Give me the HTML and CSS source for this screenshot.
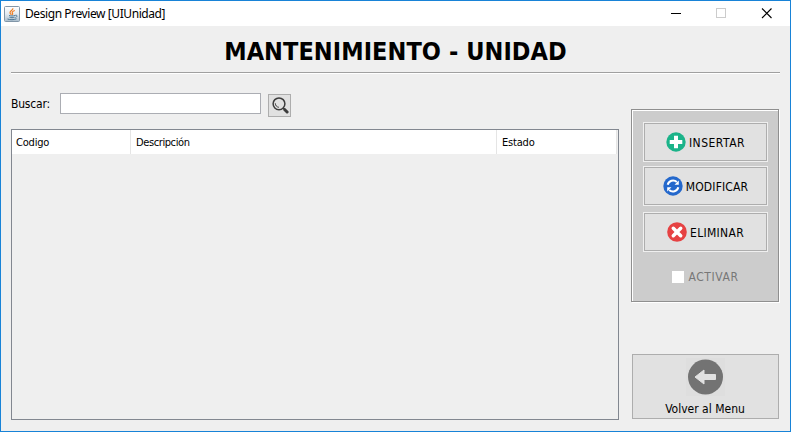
FILE: index.html
```html
<!DOCTYPE html>
<html lang="es">
<head>
<meta charset="utf-8">
<title>Design Preview [UIUnidad]</title>
<link rel="stylesheet" href="styles.css">
</head>
<body>
<div class="window">
  <header class="titlebar">
    <svg class="java" width="16" height="16" viewBox="0 0 16 16">
      <defs><linearGradient id="jg" x1="0" y1="0" x2="0" y2="1"><stop offset="0" stop-color="#fff"/><stop offset=".5" stop-color="#e4ebf1"/><stop offset="1" stop-color="#a9bccb"/></linearGradient></defs>
      <rect x=".5" y=".5" width="15" height="15" rx="1" fill="url(#jg)" stroke="#8296a8"/>
      <path d="M8.8 2.2C9.4 4 5.6 5 6 6.8c.2.9 1 1.300 1.300 2.100M10.800 4.500C8.500 5.300 7.600 6.300 8.500 7.300c.5.700.2 1.100-.2 1.600" fill="none" stroke="#ee7d22" stroke-width="1.200"/>
      <path d="M5 9.500c1.500.6 4.500.6 6 0M5.500 11.300c1.500.5 3.500.5 5 0M3.500 13c2.500 1 6.500.9 9-.2M11.200 9.300c2.300-.6 2.300 1.500.3 2.200" fill="none" stroke="#4d7896" stroke-width="1"/>
    </svg>
    <span class="caption">Design Preview [UIUnidad]</span>
    <svg class="controls" width="104" height="12" viewBox="0 0 104 12" shape-rendering="crispEdges">
      <path d="M0 5.500h10" stroke="#000"/>
      <rect x="45.500" y=".5" width="9" height="9" fill="none" stroke="#ccc"/>
      <path d="M91 .5l9.500 9.500M100.500 .5L91 10" stroke="#000" stroke-width="1.100" shape-rendering="auto"/>
    </svg>
  </header>
  <h1 class="heading"><span>MANTENIMIENTO - UNIDAD</span></h1>
  <main class="content">
    <section class="left">
      <div class="search">
        <label class="label" for="q">Buscar:</label>
        <input class="field" id="q" type="text">
        <button class="find" aria-label="Buscar">
          <svg width="19" height="19" viewBox="0 0 19 19" fill="none" stroke="#3c3c3c">
            <circle cx="9" cy="7.800" r="5.900" stroke-width="1.500"/>
            <path d="M5.300 7.300c.1 2.300 1.400 3.700 3.600 4" stroke-width="1"/>
            <path d="M13.200 12l1.500 1.500" stroke-width="1.600"/>
            <path d="M14.800 13.700l2.300 2.300" stroke-width="3" stroke-linecap="round"/>
          </svg>
        </button>
      </div>
      <div class="table">
        <div class="thead"><span class="codigo">Codigo</span><span class="desc">Descripción</span><span class="estado">Estado</span></div>
      </div>
    </section>
    <aside class="right">
      <div class="panel">
        <button class="action insert">
          <svg width="20" height="20" viewBox="0 0 20 20"><circle cx="10" cy="10" r="9.700" fill="#1bb389"/><path d="M10 3.700v12.600M3.700 10h12.600" stroke="#fff" stroke-width="4"/></svg>
          <span>INSERTAR</span>
        </button>
        <button class="action modify">
          <svg width="20" height="20" viewBox="0 0 20 20"><circle cx="10" cy="10" r="9.700" fill="#2468cc"/><path d="M4.700 8.700A5.500 5.500 0 0 1 13.800 6M15.300 11.300A5.500 5.500 0 0 1 6.200 14" fill="none" stroke="#fff" stroke-width="2"/><path d="M15.800 4.500v4.300h-4.300zM4.200 15.500v-4.300h4.300z" fill="#fff"/></svg>
          <span>MODIFICAR</span>
        </button>
        <button class="action remove">
          <svg width="20" height="20" viewBox="0 0 20 20"><circle cx="10" cy="10" r="9.800" fill="#e64243"/><path d="M6.300 6.300l7.400 7.400M13.700 6.300l-7.400 7.400" stroke="#fff" stroke-width="3.500" stroke-linecap="round"/></svg>
          <span>ELIMINAR</span>
        </button>
        <div class="check"><i class="box"></i><span>ACTIVAR</span></div>
      </div>
      <button class="back">
        <svg width="39" height="38" viewBox="0 0 39 38"><rect width="39" height="38" fill="#dedede"/><circle cx="19.500" cy="19" r="17.500" fill="#737373"/><path d="M9 19l9-7v4.500h11.500v5H18v4.500z" fill="#e1e1e1" stroke="#e1e1e1" stroke-linejoin="round"/></svg>
        <span>Volver al Menu</span>
      </button>
    </aside>
  </main>
</div>
</body>
</html>
```
FILE: styles.css
```css
* { box-sizing: border-box; }
body { margin: 0; }
.window {
  width: 791px; height: 432px;
  border: 1px solid #1883d7;
  background: #efefef;
  font-family: "DejaVu Sans Condensed", "DejaVu Sans", sans-serif;
  font-stretch: condensed;
  font-size: 12px;
  line-height: 16px;
  color: #000;
  overflow: hidden;
}
span, label { white-space: nowrap; }
button { font: inherit; color: inherit; padding: 0; margin: 0; border-radius: 0; }
svg { display: block; flex: none; }
.titlebar { height: 25px; background: #fff; display: flex; align-items: center; padding-left: 3px; }
.caption { margin-left: 5px; font-family: "Noto Sans", sans-serif; font-stretch: normal; font-size: 12px; letter-spacing: -0.42px; }
.controls { margin: 1px 15px 0 auto; }
.heading {
  margin: 0 10px; height: 48px; padding-top: 11px;
  border-bottom: 1px solid #fff; box-shadow: inset 0 -1px #a0a0a0;
  font-size: 25px; line-height: 30px; font-weight: 700; text-align: center; letter-spacing: 0.07px;
}
.content { display: flex; padding: 19px 11px 0 10px; }
.left { width: 608px; }
.search { display: flex; height: 25px; }
.label { width: 49px; padding-top: 3px; letter-spacing: -0.2px; }
.field { width: 201px; height: 21px; border: 1px solid #abadb3; background: #fff; padding: 0 3px; outline: 0; }
.find { width: 23px; height: 23px; margin: 1px 0 0 7px; border: 1px solid #adadad; background: #e1e1e1; display: flex; align-items: center; justify-content: center; }
.table { height: 291px; margin-top: 11px; border: 1px solid #828790; }
.thead { display: flex; height: 24px; width: 605px; background: #fff; font-size: 11px; line-height: 26px; border-right: 1px solid #e5e5e5; }
.thead span { padding-left: 5px; letter-spacing: -0.2px; }
.thead .codigo { width: 119px; border-right: 1px solid #e5e5e5; padding-left: 4px; }
.thead .desc { width: 366px; border-right: 1px solid #e5e5e5; letter-spacing: -0.4px; }
.right { width: 148px; margin-left: 12px; padding-top: 16px; }
.panel {
  height: 193px; border: 1px solid #8f8f8f; background: #ccc; padding: 12px 10px 0 11px;
  box-shadow: inset 1px 1px #fff, 1px 1px #fff;
}
.action { display: flex; align-items: center; justify-content: center; gap: 3px; width: 125px; height: 40px; border: 1px solid #efefef; background: #e1e1e1; box-shadow: inset 0 0 0 1px #adadad; }
.action span { padding-top: 1px; }
.insert { letter-spacing: 0.5px; }
.modify { margin-top: 4px; letter-spacing: 0.15px; }
.remove { margin-top: 6px; letter-spacing: 0.3px; }
.check { display: flex; align-items: center; justify-content: center; gap: 4px; margin-top: 17px; color: #777; letter-spacing: 0.6px; }
.box { width: 12px; height: 12px; background: #fff; }
.back { display: flex; flex-direction: column; align-items: center; width: 147px; height: 65px; margin: 52px 0 0 1px; border: 1px solid #adadad; background: #e1e1e1; }
.back svg { margin-top: 3px; }
.back span { margin-top: 5px; margin-right: 1px; }
```
